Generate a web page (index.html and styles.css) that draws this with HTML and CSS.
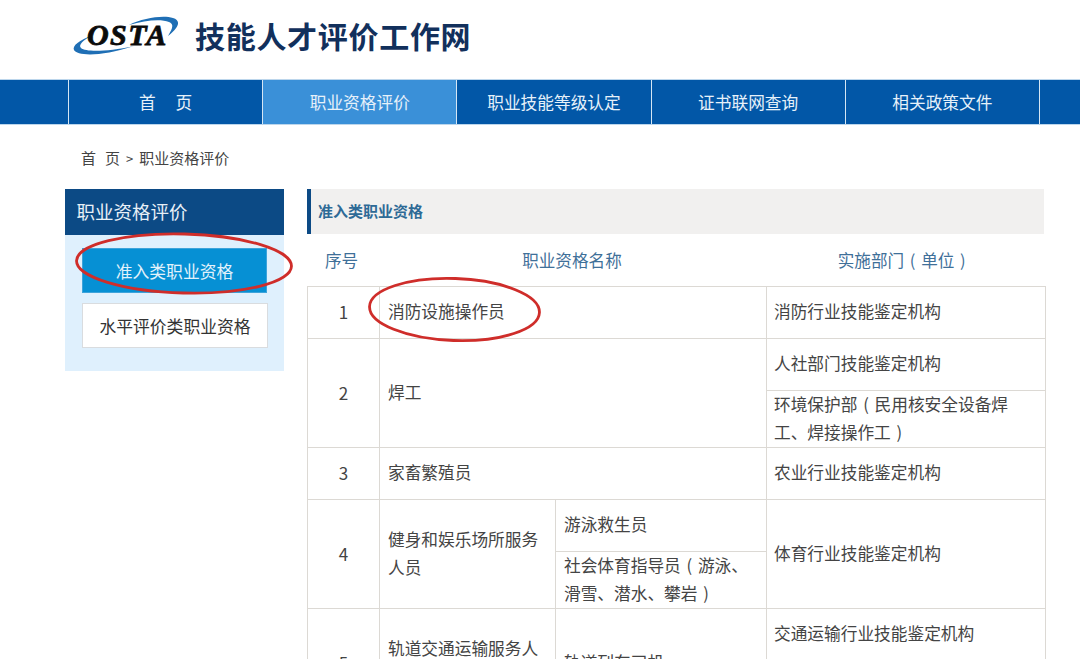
FILE: index.html
```html
<!DOCTYPE html>
<html lang="zh-CN">
<head>
<meta charset="utf-8">
<title>技能人才评价工作网</title>
<link rel="stylesheet" href="styles.css">
</head>
<body>
<div class="page">
  <header class="brand">
    <div class="logo">
      <svg class="swoosh" viewBox="0 0 110 42" width="110" height="42">
        <path fill="#1f6fb5" d="M57 9C71 2 91-1 101 2C108 4 109 10 96 20C101 12 102 8 97 6C89 3 74 4 57 9Z"/>
        <path fill="#1f6fb5" d="M21 19C7 24 0 30 2 34C5 40 29 41 62 30C34 36 14 36 9 32C6 29 11 24 21 19Z"/>
      </svg>
      <span class="logo-text">OSTA</span>
    </div>
    <div class="site-title">技能人才评价工作网</div>
  </header>

  <nav class="nav">
    <div class="nav-inner">
      <a class="nav-item">首<span class="gap"></span>页</a>
      <a class="nav-item active">职业资格评价</a>
      <a class="nav-item">职业技能等级认定</a>
      <a class="nav-item">证书联网查询</a>
      <a class="nav-item">相关政策文件</a>
    </div>
  </nav>

  <div class="crumbs"><span class="crumb-home">首<span class="gap-s"></span>页</span><span class="crumb-sep">&gt;</span>职业资格评价</div>

  <div class="content">
    <aside class="side">
      <h2 class="side-head">职业资格评价</h2>
      <div class="side-body">
        <a class="side-btn on">准入类职业资格</a>
        <a class="side-btn">水平评价类职业资格</a>
      </div>
    </aside>

    <main class="main">
      <div class="main-title">准入类职业资格</div>
      <div class="cols">
        <span class="col-a">序号</span>
        <span class="col-b">职业资格名称</span>
        <span class="col-c">实施部门 (&nbsp;单位&nbsp;)</span>
      </div>
      <table class="grid">
        <colgroup>
          <col class="w1"><col class="w2"><col class="w3"><col class="w4">
        </colgroup>
        <tr class="h52">
          <td class="num">1</td>
          <td colspan="2">消防设施操作员</td>
          <td class="org">消防行业技能鉴定机构</td>
        </tr>
        <tr class="h52">
          <td class="num" rowspan="2">2</td>
          <td colspan="2" rowspan="2">焊工</td>
          <td class="org">人社部门技能鉴定机构</td>
        </tr>
        <tr class="h57">
          <td class="org">环境保护部 (&nbsp;民用核安全设备焊工、焊接操作工&nbsp;)</td>
        </tr>
        <tr class="h52">
          <td class="num">3</td>
          <td colspan="2">家畜繁殖员</td>
          <td class="org">农业行业技能鉴定机构</td>
        </tr>
        <tr class="h52">
          <td class="num" rowspan="2">4</td>
          <td rowspan="2">健身和娱乐场所服务人员</td>
          <td>游泳救生员</td>
          <td class="org" rowspan="2">体育行业技能鉴定机构</td>
        </tr>
        <tr class="h57">
          <td>社会体育指导员 (&nbsp;游泳、滑雪、潜水、攀岩&nbsp;)</td>
        </tr>
        <tr class="h52">
          <td class="num" rowspan="2">5</td>
          <td rowspan="2">轨道交通运输服务人员</td>
          <td rowspan="2">轨道列车司机</td>
          <td class="org">交通运输行业技能鉴定机构</td>
        </tr>
        <tr class="h57">
          <td class="org">铁路行业技能鉴定机构</td>
        </tr>
      </table>
    </main>
  </div>

  <svg class="marks" viewBox="0 0 1080 659" width="1080" height="659">
    <ellipse cx="184" cy="263.5" rx="107.5" ry="29.5" transform="rotate(1.5 184 263.5)"/>
    <ellipse cx="454.5" cy="309.5" rx="85" ry="31" transform="rotate(2 454.5 309.5)"/>
  </svg>
</div>
</body>
</html>
```
FILE: styles.css
```css
* { box-sizing: border-box; }
html, body { margin: 0; padding: 0; background: #fff; }
body {
  font-family: "Noto Sans CJK SC", "Noto Sans", sans-serif;
  color: #333;
}
.page { position: relative; width: 1080px; height: 659px; overflow: hidden; }

.brand { height: 79px; display: flex; align-items: flex-start; padding-left: 72px; }
.logo { position: relative; width: 110px; height: 42px; margin-top: 16px; flex: none; }
.swoosh { display: block; }
.logo-text {
  position: absolute; left: 15px; top: 0;
  font: italic bold 30px/38px "Liberation Serif", serif;
  letter-spacing: 1.4px; color: #0b0b0b;
  -webkit-text-stroke: 0.8px #0b0b0b;
}
.site-title {
  margin: 12px 0 0 13px;
  font-size: 30px; line-height: 46px; font-weight: 700;
  letter-spacing: 0.7px; color: #12305c; white-space: nowrap;
}

.nav {
  height: 46px; background: #0257a7;
  border-top: 1px solid #bcd6ec; border-bottom: 1px solid #bcd6ec;
  padding-left: 68px;
}
.nav-inner { display: flex; height: 100%; border-left: 1px solid #d5e6f4; }
.nav-item {
  width: 194.2px; flex: none; display: flex; align-items: center; justify-content: center;
  border-right: 1px solid #d5e6f4;
  color: #e6f1fa; font-size: 16.7px; white-space: nowrap;
}
.nav-item.active { background: #3a90d8; }
.gap { display: inline-block; width: 20px; }

.crumbs {
  height: 64px; padding: 22px 0 0 81px;
  font-size: 15px; line-height: 22px; color: #444; white-space: nowrap;
}
.crumb-home { margin-right: 6px; }
.gap-s { display: inline-block; width: 9px; }
.crumb-sep { margin-right: 6px; font-size: 13px; }

.content { display: flex; align-items: flex-start; padding-left: 65px; }

.side { width: 219px; flex: none; }
.side-head {
  margin: 0; height: 46px; padding-left: 11.5px;
  background: #0c4a85; color: #e8f0f7;
  font-size: 18.5px; line-height: 44px; font-weight: 400;
}
.side-body {
  height: 136px; background: #dff0fd; padding: 13px 16px 0 17px;
  display: flex; flex-direction: column; gap: 10px;
}
.side-btn {
  height: 45px; display: flex; align-items: center; justify-content: center;
  background: #fff; border: 1px solid #d9dcdf;
  font-size: 16.8px; color: #333; white-space: nowrap;
}
.side-btn.on { background: #0690d4; border-color: #3da3da; color: #e2f2fb; margin-right: 1px; }

.main { width: 738px; margin-left: 23px; flex: none; }
.main-title {
  width: 737px; height: 45px; padding-left: 7px;
  background: #f1f0ef; border-left: 4px solid #0c4a85;
  color: #2e6a96; font-size: 15px; line-height: 43px; font-weight: 700;
}
.cols {
  display: flex; height: 52px; align-items: center;
  color: #3f7099; font-size: 16.6px; white-space: nowrap; word-spacing: 2px;
}
.col-a { margin-left: 18px; }
.col-b { margin-left: 164px; }
.col-c { margin-left: 216px; }

.grid {
  width: 738px; table-layout: fixed; border-collapse: collapse;
  font-size: 16.7px; line-height: 27.5px; color: #444; word-spacing: 2px;
}
.w1 { width: 72px; } .w2 { width: 176px; } .w3 { width: 211px; } .w4 { width: 279px; }
.grid td { border: 1px solid #dcd9d4; padding: 0 8px 1px; vertical-align: middle; }
.grid td.org { padding-left: 7px; }
.grid td.num { text-align: center; padding: 0 0 1px; font-size: 17px; }
.h52 { height: 52px; }
.h57 { height: 57px; }

.marks { position: absolute; left: 0; top: 0; pointer-events: none; }
.marks ellipse { fill: none; stroke: #cf2d2a; stroke-width: 2.8; }
```
